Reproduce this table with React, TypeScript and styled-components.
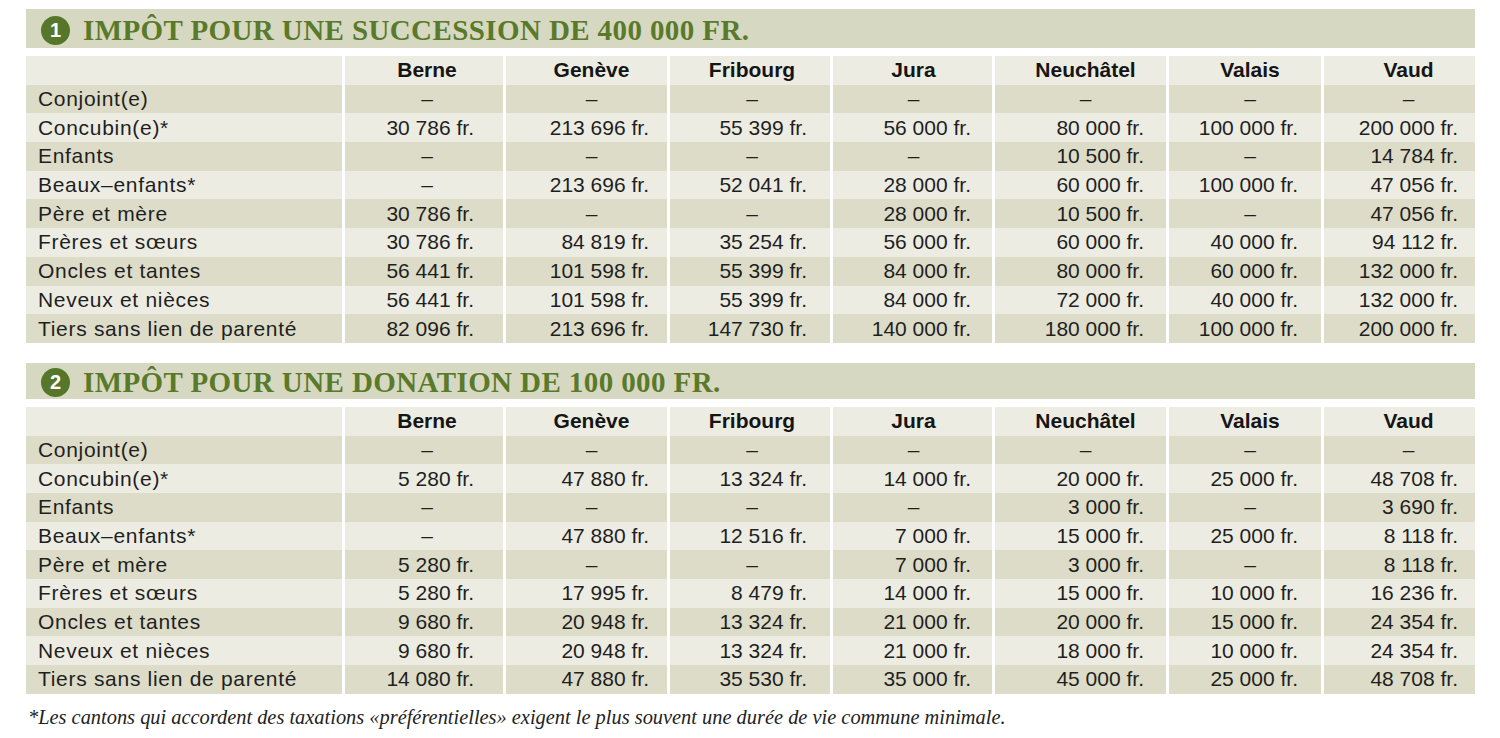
import React from 'react';
import styled, {createGlobalStyle} from 'styled-components';

const GlobalStyle = createGlobalStyle`
    body {
        margin: 0;
        background: #ffffff;
    }
`;

type Column = { name: string; pad: number; shift: number };

const columns: Column[] = [
    {name: 'Berne', pad: 29, shift: 6},
    {name: 'Genève', pad: 18, shift: 10},
    {name: 'Fribourg', pad: 23, shift: 4},
    {name: 'Jura', pad: 21, shift: 2},
    {name: 'Neuchâtel', pad: 22, shift: 10},
    {name: 'Valais', pad: 23, shift: 10},
    {name: 'Vaud', pad: 17, shift: 18},
];

const labels = [
    'Conjoint(e)',
    'Concubin(e)*',
    'Enfants',
    'Beaux–enfants*',
    'Père et mère',
    'Frères et sœurs',
    'Oncles et tantes',
    'Neveux et nièces',
    'Tiers sans lien de parenté',
];

const succession: string[][] = [
    ['', '', '', '', '', '', ''],
    ['30 786', '213 696', '55 399', '56 000', '80 000', '100 000', '200 000'],
    ['', '', '', '', '10 500', '', '14 784'],
    ['', '213 696', '52 041', '28 000', '60 000', '100 000', '47 056'],
    ['30 786', '', '', '28 000', '10 500', '', '47 056'],
    ['30 786', '84 819', '35 254', '56 000', '60 000', '40 000', '94 112'],
    ['56 441', '101 598', '55 399', '84 000', '80 000', '60 000', '132 000'],
    ['56 441', '101 598', '55 399', '84 000', '72 000', '40 000', '132 000'],
    ['82 096', '213 696', '147 730', '140 000', '180 000', '100 000', '200 000'],
];

const donation: string[][] = [
    ['', '', '', '', '', '', ''],
    ['5 280', '47 880', '13 324', '14 000', '20 000', '25 000', '48 708'],
    ['', '', '', '', '3 000', '', '3 690'],
    ['', '47 880', '12 516', '7 000', '15 000', '25 000', '8 118'],
    ['5 280', '', '', '7 000', '3 000', '', '8 118'],
    ['5 280', '17 995', '8 479', '14 000', '15 000', '10 000', '16 236'],
    ['9 680', '20 948', '13 324', '21 000', '20 000', '15 000', '24 354'],
    ['9 680', '20 948', '13 324', '21 000', '18 000', '10 000', '24 354'],
    ['14 080', '47 880', '35 530', '35 000', '45 000', '25 000', '48 708'],
];

const TaxTable = ({data}: { data: string[][] }) => (
    <Table>
        <Row>
            <LabelCell $dark={false}/>
            {columns.map(c => (
                <HeadCell key={c.name} $shift={c.shift}>{c.name}</HeadCell>
            ))}
        </Row>
        {labels.map((label, i) => {
            const dark = i % 2 === 0;
            return (
                <Row key={label}>
                    <LabelCell $dark={dark}>{label}</LabelCell>
                    {data[i].map((value, j) => value
                        ? <ValueCell key={j} $dark={dark} $pad={columns[j].pad}>{value} fr.</ValueCell>
                        : <DashCell key={j} $dark={dark} $shift={columns[j].shift}>–</DashCell>
                    )}
                </Row>
            );
        })}
    </Table>
);

export default function App() {
    return (
        <Page>
            <GlobalStyle/>
            <TitleBar $height={39}>
                <Badge>1</Badge>
                <Title>IMPÔT POUR UNE SUCCESSION DE 400 000 FR.</Title>
            </TitleBar>
            <TaxTable data={succession}/>
            <TitleBar $height={36} $top={20}>
                <Badge>2</Badge>
                <Title>IMPÔT POUR UNE DONATION DE 100 000 FR.</Title>
            </TitleBar>
            <TaxTable data={donation}/>
            <Footnote>
                *Les cantons qui accordent des taxations «préférentielles» exigent le plus souvent une durée de vie commune minimale.
            </Footnote>
        </Page>
    );
}

const Page = styled.div`
    width: 1449px;
    padding: 9px 0 0 26px;
    font-family: "Liberation Sans", Arial, sans-serif;
    color: #1f1f1f;
`;

const TitleBar = styled.div<{ $height: number; $top?: number }>`
    display: flex;
    align-items: center;
    gap: 13px;
    height: ${p => p.$height}px;
    margin-top: ${p => p.$top ?? 0}px;
    padding-left: 15px;
    background: #d6d8c1;
`;

const Badge = styled.span`
    display: flex;
    align-items: center;
    justify-content: center;
    width: 29px;
    height: 29px;
    margin-top: 3px;
    border-radius: 50%;
    background: #56772a;
    color: #ffffff;
    font-family: "Liberation Sans", Arial, sans-serif;
    font-weight: bold;
    font-size: 20px;
`;

const Title = styled.h2`
    margin: 0;
    padding-top: 3px;
    font-family: "Liberation Serif", "Times New Roman", serif;
    font-weight: bold;
    font-size: 29px;
    letter-spacing: 0.4px;
    color: #5a7a2b;
`;

const Table = styled.div`
    margin-top: 8px;
    display: flex;
    flex-direction: column;
`;

const Row = styled.div`
    display: grid;
    grid-template-columns: 316px 158px 161px 160px 159px 171px 152px 151px;
    column-gap: 3px;
    height: 28.7px;
    background: #ffffff;
    font-size: 21px;
`;

const Cell = styled.div<{ $dark?: boolean }>`
    display: flex;
    align-items: center;
    background: ${p => (p.$dark ? '#dcdcc8' : '#ecece3')};
    white-space: nowrap;
`;

const LabelCell = styled(Cell)`
    padding-left: 12px;
    letter-spacing: 0.7px;
`;

const HeadCell = styled(Cell)<{ $shift: number }>`
    justify-content: center;
    padding-left: ${p => p.$shift}px;
    font-weight: bold;
    color: #151515;
`;

const ValueCell = styled(Cell)<{ $pad: number }>`
    justify-content: flex-end;
    padding-right: ${p => p.$pad}px;
`;

const DashCell = styled(Cell)<{ $shift: number }>`
    justify-content: center;
    padding-left: ${p => p.$shift}px;
`;

const Footnote = styled.p`
    margin: 12px 0 0 2px;
    font-family: "Liberation Serif", "Times New Roman", serif;
    font-style: italic;
    font-size: 20.4px;
    color: #222222;
`;
